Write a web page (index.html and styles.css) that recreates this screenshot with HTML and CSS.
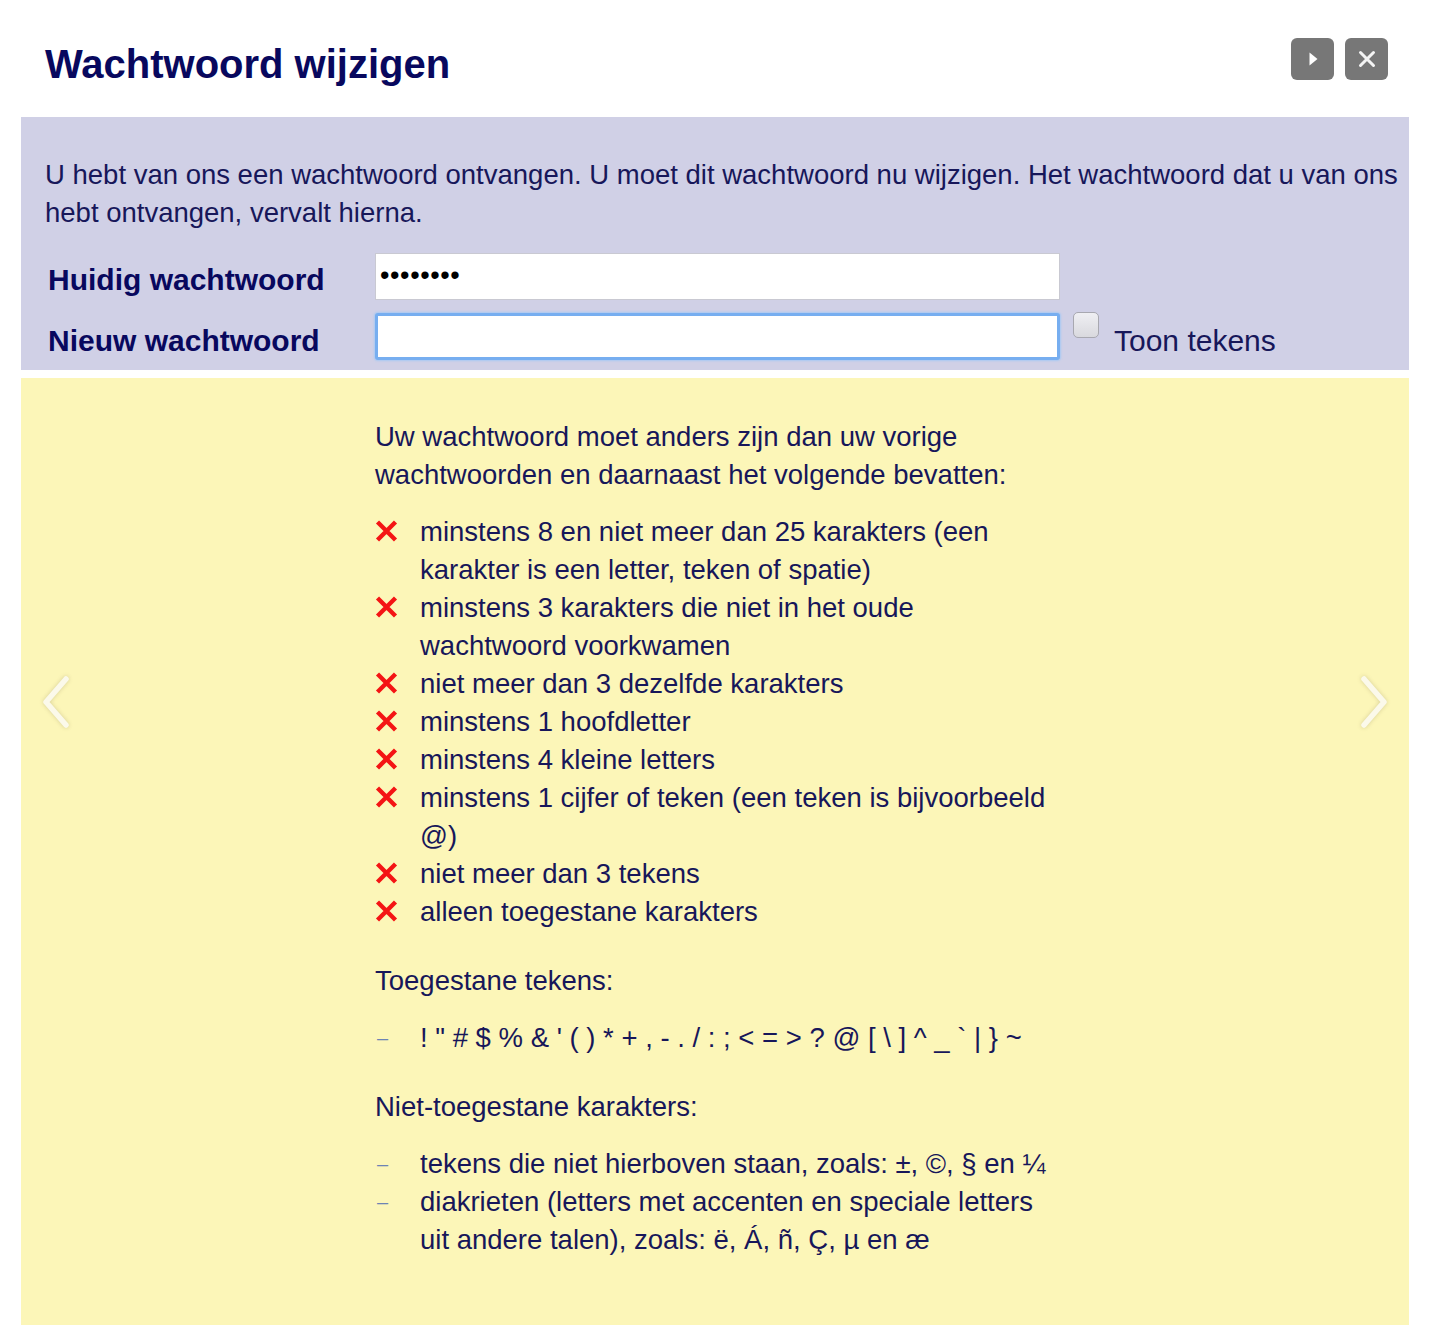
FILE: index.html
```html
<!DOCTYPE html>
<html lang="nl">
<head>
<meta charset="utf-8">
<title>Wachtwoord wijzigen</title>
<link rel="stylesheet" href="styles.css">
</head>
<body>
<div class="dialog">
  <header class="head">
    <h1 class="title">Wachtwoord wijzigen</h1>
    <div class="tools">
      <button class="tool" aria-label="Volgende">
        <svg width="14" height="18" viewBox="0 0 14 18"><path d="M3.5 2.5 L11.5 9 L3.5 15.5 Z" fill="#fff"/></svg>
      </button>
      <button class="tool" aria-label="Sluiten">
        <svg width="20" height="20" viewBox="0 0 20 20"><path d="M3.5 3.5 L16.5 16.5 M16.5 3.5 L3.5 16.5" stroke="#f4f4f4" stroke-width="3" stroke-linecap="round"/></svg>
      </button>
    </div>
  </header>

  <section class="form">
    <p class="intro">U hebt van ons een wachtwoord ontvangen. U moet dit wachtwoord nu wijzigen. Het wachtwoord dat u van ons<br>hebt ontvangen, vervalt hierna.</p>
    <div class="row">
      <label class="lbl">Huidig wachtwoord</label>
      <div class="field"><span class="dots">••••••••</span></div>
    </div>
    <div class="row">
      <label class="lbl">Nieuw wachtwoord</label>
      <div class="field focus"></div>
      <span class="check"></span>
      <span class="toon">Toon tekens</span>
    </div>
  </section>

  <section class="rules">
    <div class="nav prev">
      <svg width="40" height="56" viewBox="0 0 40 56"><polyline points="30,5 10,28 30,51" fill="none" stroke="#fbf9ea" stroke-width="5.5" stroke-linecap="round" stroke-linejoin="round"/></svg>
    </div>
    <div class="nav next">
      <svg width="40" height="56" viewBox="0 0 40 56"><polyline points="10,5 30,28 10,51" fill="none" stroke="#fbf9ea" stroke-width="5.5" stroke-linecap="round" stroke-linejoin="round"/></svg>
    </div>
    <div class="col">
      <p class="p">Uw wachtwoord moet anders zijn dan uw vorige<br>wachtwoorden en daarnaast het volgende bevatten:</p>
      <ul class="list">
        <li><span class="x"><svg width="23" height="22" viewBox="0 0 23 22"><path d="M2.5 2 L20.5 20 M20.5 2 L2.5 20" stroke="#f41414" stroke-width="4.4"/></svg></span><span>minstens 8 en niet meer dan 25 karakters (een<br>karakter is een letter, teken of spatie)</span></li>
        <li><span class="x"><svg width="23" height="22" viewBox="0 0 23 22"><path d="M2.5 2 L20.5 20 M20.5 2 L2.5 20" stroke="#f41414" stroke-width="4.4"/></svg></span><span>minstens 3 karakters die niet in het oude<br>wachtwoord voorkwamen</span></li>
        <li><span class="x"><svg width="23" height="22" viewBox="0 0 23 22"><path d="M2.5 2 L20.5 20 M20.5 2 L2.5 20" stroke="#f41414" stroke-width="4.4"/></svg></span><span>niet meer dan 3 dezelfde karakters</span></li>
        <li><span class="x"><svg width="23" height="22" viewBox="0 0 23 22"><path d="M2.5 2 L20.5 20 M20.5 2 L2.5 20" stroke="#f41414" stroke-width="4.4"/></svg></span><span>minstens 1 hoofdletter</span></li>
        <li><span class="x"><svg width="23" height="22" viewBox="0 0 23 22"><path d="M2.5 2 L20.5 20 M20.5 2 L2.5 20" stroke="#f41414" stroke-width="4.4"/></svg></span><span>minstens 4 kleine letters</span></li>
        <li><span class="x"><svg width="23" height="22" viewBox="0 0 23 22"><path d="M2.5 2 L20.5 20 M20.5 2 L2.5 20" stroke="#f41414" stroke-width="4.4"/></svg></span><span>minstens 1 cijfer of teken (een teken is bijvoorbeeld<br>@)</span></li>
        <li><span class="x"><svg width="23" height="22" viewBox="0 0 23 22"><path d="M2.5 2 L20.5 20 M20.5 2 L2.5 20" stroke="#f41414" stroke-width="4.4"/></svg></span><span>niet meer dan 3 tekens</span></li>
        <li><span class="x"><svg width="23" height="22" viewBox="0 0 23 22"><path d="M2.5 2 L20.5 20 M20.5 2 L2.5 20" stroke="#f41414" stroke-width="4.4"/></svg></span><span>alleen toegestane karakters</span></li>
      </ul>
      <p class="p">Toegestane tekens:</p>
      <ul class="list dash">
        <li><span class="d">–</span><span class="chars">! " # $ % &amp; ' ( ) * + , - . / : ; &lt; = &gt; ? @ [ \ ] ^ _ ` | } ~</span></li>
      </ul>
      <p class="p">Niet-toegestane karakters:</p>
      <ul class="list dash">
        <li><span class="d">–</span><span>tekens die niet hierboven staan, zoals: ±, ©, § en ¼</span></li>
        <li><span class="d">–</span><span>diakrieten (letters met accenten en speciale letters<br>uit andere talen), zoals: ë, Á, ñ, Ç, µ en æ</span></li>
      </ul>
    </div>
  </section>
</div>
</body>
</html>
```

FILE: styles.css
```css
html, body {
  margin: 0;
  padding: 0;
  background: #fff;
}

body {
  font-family: "Liberation Sans", Arial, Helvetica, sans-serif;
  color: #17175a;
}

.dialog {
  margin: 0 21px;
}

.head {
  display: flex;
  justify-content: space-between;
  align-items: flex-start;
  height: 117px;
  padding-left: 24px;
  padding-right: 21px;
  box-sizing: border-box;
}

.title {
  margin: 41px 0 0;
  font-size: 40px;
  line-height: 46px;
  font-weight: bold;
  color: #08085e;
}

.tools {
  display: flex;
  gap: 11px;
  margin-top: 38px;
}

.tool {
  width: 43px;
  height: 42px;
  border: 0;
  padding: 0;
  border-radius: 6px;
  background: #777777;
  display: flex;
  align-items: center;
  justify-content: center;
}

.form {
  background: #d0d0e6;
  padding: 39px 0 10px 24px;
  font-size: 27.5px;
}

.intro {
  margin: 0 0 21px;
  line-height: 38px;
  white-space: nowrap;
}

.row {
  display: flex;
  align-items: flex-start;
  height: 47px;
  margin-top: 13px;
}

.row:first-of-type {
  margin-top: 0;
}

.lbl {
  width: 327px;
  padding-left: 3px;
  font-weight: bold;
  font-size: 30px;
  line-height: 54px;
  color: #08085e;
}

.row + .row .lbl {
  line-height: 55px;
}

.field {
  width: 685px;
  height: 47px;
  flex: none;
  box-sizing: border-box;
  background: #fff;
  border: 1px solid #c9c9d2;
  display: flex;
  align-items: center;
  padding-left: 4px;
}

.dots {
  font-size: 27px;
  letter-spacing: 0.6px;
  color: #000;
  margin-top: -2px;
}

.field.focus {
  border: 3px solid #77aef0;
  box-shadow: 0 0 2px 1px #a9c9f3;
  border-radius: 3px;
}

.check {
  width: 26px;
  height: 26px;
  flex: none;
  box-sizing: border-box;
  margin: -1px 0 0 13px;
  border: 1px solid #a8a8b0;
  border-radius: 5px;
  background: linear-gradient(#efeff3, #d9d9de);
}

.toon {
  margin-left: 15px;
  line-height: 55px;
  font-size: 30px;
}

.rules {
  position: relative;
  margin-top: 8px;
  height: 947px;
  background: #fcf6b8;
  padding-top: 40px;
  box-sizing: border-box;
}

.col {
  margin-left: 354px;
  width: 700px;
  font-size: 27.5px;
  line-height: 38px;
}

.p {
  margin: 0 0 19px;
}

.list {
  list-style: none;
  margin: 0 0 31px;
  padding: 0;
}

.list li {
  display: flex;
}

.x {
  width: 45px;
  flex: none;
  padding-top: 7px;
  height: 30px;
}

.x svg {
  display: block;
}

.d {
  width: 45px;
  flex: none;
  color: #6d84b4;
  font-size: 20px;
  padding-left: 2px;
  box-sizing: border-box;
}

.nav {
  position: absolute;
  top: 296px;
  filter: drop-shadow(0 0 2px rgba(170, 160, 110, 0.45));
}

.nav svg {
  display: block;
}

.prev {
  left: 15px;
}

.next {
  right: 15px;
}
```
